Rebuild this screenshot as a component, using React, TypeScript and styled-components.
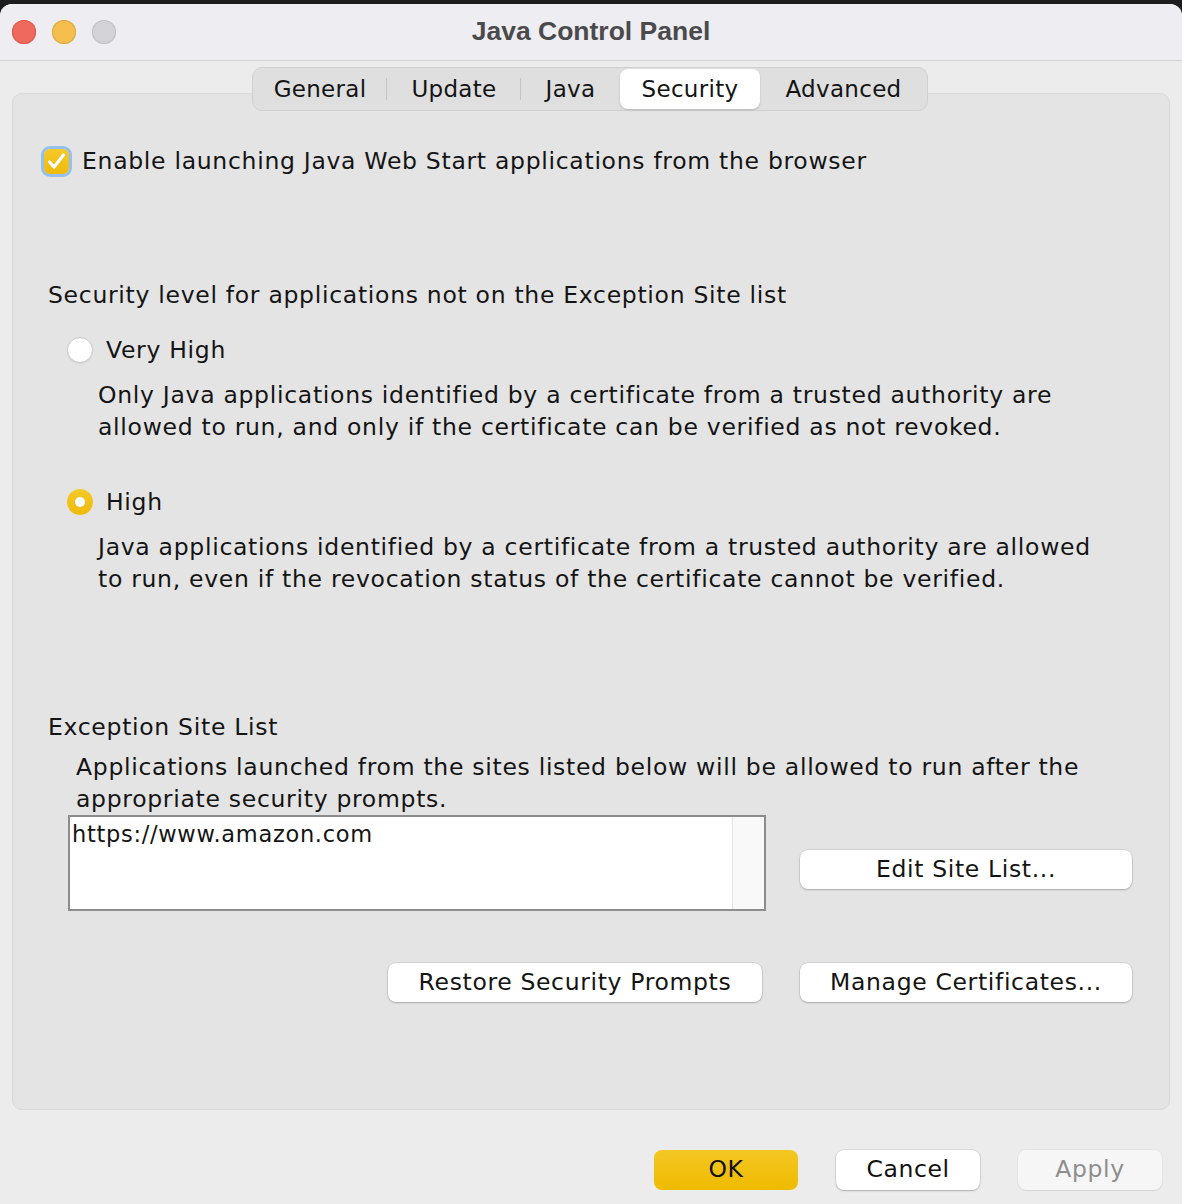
import React, { useState } from 'react'
import styled, { createGlobalStyle } from 'styled-components'

const GlobalStyle = createGlobalStyle`
	html, body {
		margin: 0;
		padding: 0;
		background: #1d1d1f;
	}
	body {
		font-family: 'DejaVu Sans', 'Noto Sans', sans-serif;
		color: #141414;
	}
`

const Window = styled.div`
	margin-top: 4px;
	width: 1182px;
	height: 1200px;
	background: #ececec;
	border-radius: 12px 12px 0 0;
	display: flex;
	flex-direction: column;
	overflow: hidden;
`

const TitleBar = styled.div`
	height: 56px;
	flex-shrink: 0;
	background: #eeedf1;
	border-bottom: 1px solid #d2d2d4;
	display: grid;
	grid-template-columns: 1fr auto 1fr;
	align-items: center;
	padding: 0 12px;
`

const Lights = styled.div`
	display: flex;
	gap: 16px;
`

const Light = styled.span<{ $color: string; $edge: string }>`
	width: 24px;
	height: 24px;
	border-radius: 50%;
	background: ${(p) => p.$color};
	box-shadow: inset 0 0 0 1px ${(p) => p.$edge};
`

const Title = styled.div`
	font-family: 'Liberation Sans', Arial, sans-serif;
	font-weight: bold;
	font-size: 26.5px;
	color: #4a4a4c;
	padding-bottom: 1px;
`

const Body = styled.div`
	flex: 1;
	display: flex;
	flex-direction: column;
	padding: 0 12px;
`

const TabBar = styled.div`
	align-self: center;
	margin-top: 6px;
	margin-left: -2px;
	position: relative;
	z-index: 1;
	display: flex;
	height: 42px;
	background: #dfdfdf;
	border: 1px solid #d0d0d0;
	border-radius: 10px;
	align-items: center;
`

const Tab = styled.div<{ $w: number; $active?: boolean; $sep?: boolean }>`
	width: ${(p) => p.$w}px;
	height: ${(p) => (p.$active ? '40px' : '42px')};
	display: flex;
	align-items: center;
	justify-content: center;
	font-size: 23px;
	letter-spacing: 0.3px;
	position: relative;
	border-radius: 8px;
	background: ${(p) => (p.$active ? '#ffffff' : 'transparent')};
	box-shadow: ${(p) => (p.$active ? '0 1px 2px rgba(0,0,0,0.18)' : 'none')};
	&::after {
		content: '';
		display: ${(p) => (p.$sep ? 'block' : 'none')};
		position: absolute;
		right: 0;
		top: 10px;
		height: 22px;
		width: 1px;
		background: #c4c4c4;
	}
`

const Panel = styled.div`
	margin-top: -18px;
	height: 1017px;
	box-sizing: border-box;
	background: #e4e4e4;
	border: 1px solid #d9d9d9;
	border-radius: 10px;
	padding: 51px 37px 0 35px;
	display: flex;
	flex-direction: column;
	font-size: 23.5px;
	letter-spacing: 0.7px;
	line-height: 32px;
`

const CheckRow = styled.label`
	display: flex;
	align-items: center;
	gap: 10px;
	margin-left: -7px;
`

const CheckBox = styled.span`
	width: 25px;
	height: 25px;
	border-radius: 6px;
	background: linear-gradient(#f5c92a, #efbb0a);
	box-shadow: 0 0 0 3px #94c0ee;
	display: flex;
	align-items: center;
	justify-content: center;
	margin: 3px;
`

const Heading = styled.div<{ $top: number }>`
	margin-top: ${(p) => p.$top}px;
`

const RadioRow = styled.label<{ $top: number }>`
	display: flex;
	align-items: center;
	gap: 13px;
	margin-top: ${(p) => p.$top}px;
	margin-left: 19px;
`

const RadioDot = styled.span<{ $on?: boolean }>`
	width: 26px;
	height: 26px;
	box-sizing: border-box;
	border-radius: 50%;
	background: ${(p) => (p.$on ? 'linear-gradient(#f5c92a, #efbb0a)' : '#ffffff')};
	border: ${(p) => (p.$on ? 'none' : '1px solid #c9c9c9')};
	box-shadow: ${(p) => (p.$on ? 'none' : '0 1px 1px rgba(0,0,0,0.06)')};
	display: flex;
	align-items: center;
	justify-content: center;
	&::after {
		content: '';
		display: ${(p) => (p.$on ? 'block' : 'none')};
		width: 10px;
		height: 10px;
		border-radius: 50%;
		background: #ffffff;
	}
`

const Desc = styled.div<{ $left: number; $top: number }>`
	margin-left: ${(p) => p.$left}px;
	margin-top: ${(p) => p.$top}px;
`

const ListRow = styled.div`
	display: flex;
	align-items: flex-start;
	justify-content: space-between;
	margin-left: 20px;
`

const SiteList = styled.div`
	width: 698px;
	height: 96px;
	box-sizing: border-box;
	border: 2px solid #8c8c8c;
	background: #ffffff;
	display: flex;
`

const SiteItems = styled.div`
	flex: 1;
	padding: 0 0 0 2px;
	font-size: 22.5px;
	line-height: 34px;
`

const ScrollTrack = styled.div`
	width: 31px;
	background: #f9f9f9;
	border-left: 1px solid #e4e4e4;
`

const Button = styled.button<{ $w: number; $top?: number }>`
	width: ${(p) => p.$w}px;
	height: 39px;
	margin-top: ${(p) => p.$top ?? 0}px;
	border: none;
	border-radius: 8px;
	background: #ffffff;
	box-shadow: 0 0 0 0.5px rgba(0,0,0,0.12), 0 1px 2px rgba(0,0,0,0.22);
	font-family: inherit;
	font-size: 23.5px;
	letter-spacing: 0.65px;
	color: #141414;
	padding: 0 0 2px;
`

const ButtonRow = styled.div`
	display: flex;
	justify-content: flex-end;
	gap: 38px;
	margin-top: 52px;
`

const Footer = styled.div`
	display: flex;
	justify-content: flex-end;
	gap: 38px;
	padding: 40px 8px 0 0;
`

const DialogButton = styled.button<{ $kind: 'primary' | 'normal' | 'disabled' }>`
	width: 144px;
	height: 40px;
	border: none;
	border-radius: 8px;
	font-family: inherit;
	font-size: 23.5px;
	letter-spacing: 0.6px;
	padding: 0 0 2px;
	background: ${(p) =>
		p.$kind === 'primary'
			? 'linear-gradient(#f3c623, #efbb00)'
			: p.$kind === 'disabled'
			? '#f6f6f6'
			: '#ffffff'};
	color: ${(p) => (p.$kind === 'disabled' ? '#8e8e8e' : '#111111')};
	box-shadow: ${(p) =>
		p.$kind === 'primary'
			? 'none'
			: p.$kind === 'disabled'
			? '0 0 0 0.5px rgba(0,0,0,0.06), 0 1px 1px rgba(0,0,0,0.08)'
			: '0 0 0 0.5px rgba(0,0,0,0.12), 0 1px 2px rgba(0,0,0,0.22)'};
`

const tabs = [
	{ name: 'General', w: 134 },
	{ name: 'Update', w: 134 },
	{ name: 'Java', w: 99 },
	{ name: 'Security', w: 140 },
	{ name: 'Advanced', w: 167 },
]

export default function App() {
	const [level, setLevel] = useState<'veryhigh' | 'high'>('high')
	const active = 'Security'

	return (
		<>
			<GlobalStyle />
			<Window>
				<TitleBar>
					<Lights>
						<Light $color='#ee6a5e' $edge='#d9554a' />
						<Light $color='#f5bf4f' $edge='#dea63a' />
						<Light $color='#d4d3d8' $edge='#c0bfc4' />
					</Lights>
					<Title>Java Control Panel</Title>
					<div />
				</TitleBar>
				<Body>
					<TabBar>
						{tabs.map((t, i) => (
							<Tab
								key={t.name}
								$w={t.w}
								$active={t.name === active}
								$sep={i < 2}
							>
								{t.name}
							</Tab>
						))}
					</TabBar>
					<Panel>
						<CheckRow>
							<CheckBox>
								<svg width='25' height='25' viewBox='0 0 25 25'>
									<path
										d='M5.5 13 L10 18 L19.5 6'
										fill='none'
										stroke='#ffffff'
										strokeWidth='3.2'
										strokeLinecap='round'
										strokeLinejoin='round'
									/>
								</svg>
							</CheckBox>
							Enable launching Java Web Start applications from the browser
						</CheckRow>
						<Heading $top={102}>
							Security level for applications not on the Exception Site list
						</Heading>
						<RadioRow $top={23} onClick={() => setLevel('veryhigh')}>
							<RadioDot $on={level === 'veryhigh'} />
							Very High
						</RadioRow>
						<Desc $left={50} $top={13}>
							Only Java applications identified by a certificate from a trusted authority are
							<br />
							allowed to run, and only if the certificate can be verified as not revoked.
						</Desc>
						<RadioRow $top={43} onClick={() => setLevel('high')}>
							<RadioDot $on={level === 'high'} />
							High
						</RadioRow>
						<Desc $left={50} $top={13}>
							Java applications identified by a certificate from a trusted authority are allowed
							<br />
							to run, even if the revocation status of the certificate cannot be verified.
						</Desc>
						<Heading $top={116}>Exception Site List</Heading>
						<Desc $left={28} $top={8}>
							Applications launched from the sites listed below will be allowed to run after the
							<br />
							appropriate security prompts.
						</Desc>
						<ListRow>
							<SiteList>
								<SiteItems>https://www.amazon.com</SiteItems>
								<ScrollTrack />
							</SiteList>
							<Button $w={332} $top={35}>
								Edit Site List...
							</Button>
						</ListRow>
						<ButtonRow>
							<Button $w={374}>Restore Security Prompts</Button>
							<Button $w={332}>Manage Certificates...</Button>
						</ButtonRow>
					</Panel>
					<Footer>
						<DialogButton $kind='primary'>OK</DialogButton>
						<DialogButton $kind='normal'>Cancel</DialogButton>
						<DialogButton $kind='disabled'>Apply</DialogButton>
					</Footer>
				</Body>
			</Window>
		</>
	)
}
